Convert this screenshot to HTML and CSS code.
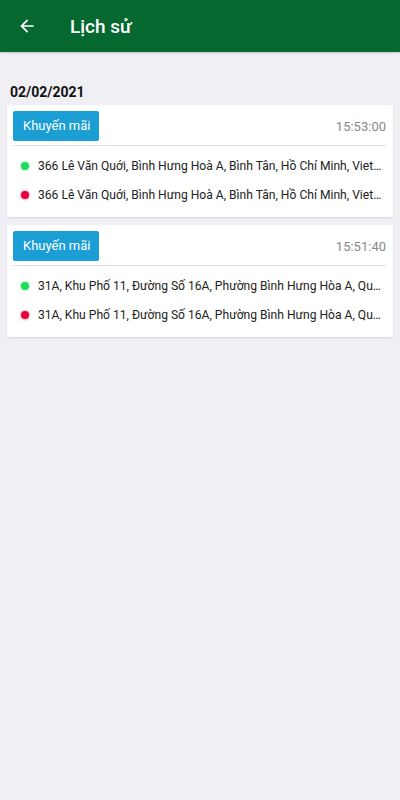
FILE: index.html
```html
<!DOCTYPE html>
<html lang="vi">
<head>
  <meta charset="UTF-8">
  <meta name="viewport" content="width=device-width, initial-scale=1.0">
  <title>Lịch sử</title>
  <link rel="stylesheet" href="styles.css">
</head>
<body>
  <header class="app-bar">
    <svg class="back" width="20" height="20" viewBox="0 0 24 24">
      <path d="M20 11H7.83l5.59-5.59L12 4l-8 8 8 8 1.41-1.41L7.83 13H20v-2z" fill="#fff"/>
    </svg>
    <h1>Lịch sử</h1>
  </header>

  <main class="content">
    <h2 class="date">02/02/2021</h2>

    <div class="card">
      <div class="card-head">
        <span class="tag">Khuyến mãi</span>
        <span class="time">15:53:00</span>
      </div>
      <div class="route">
        <div class="stop"><span class="dot start"></span><span class="addr">366 Lê Văn Quới, Bình Hưng Hoà A, Bình Tân, Hồ Chí Minh, Viet…</span></div>
        <div class="stop"><span class="dot end"></span><span class="addr">366 Lê Văn Quới, Bình Hưng Hoà A, Bình Tân, Hồ Chí Minh, Viet…</span></div>
      </div>
    </div>

    <div class="card">
      <div class="card-head">
        <span class="tag">Khuyến mãi</span>
        <span class="time">15:51:40</span>
      </div>
      <div class="route">
        <div class="stop"><span class="dot start"></span><span class="addr">31A, Khu Phố 11, Đường Số 16A, Phường Bình Hưng Hòa A, Qu…</span></div>
        <div class="stop"><span class="dot end"></span><span class="addr">31A, Khu Phố 11, Đường Số 16A, Phường Bình Hưng Hòa A, Qu…</span></div>
      </div>
    </div>
  </main>
</body>
</html>
```

FILE: styles.css
```css
/* Global */
body {
  margin: 0;
  font-family: Roboto, 'Noto Sans', sans-serif;
  background-color: #efeff4;
  color: #222;
  height: 800px;
}

/* App bar */
.app-bar {
  height: 52px;
  background-color: #05692f;
  display: flex;
  align-items: center;
  padding-left: 17px;
  box-shadow: 0 1px 2px rgba(0, 0, 0, 0.2);
}

.app-bar h1 {
  margin: 0 0 0 33px;
  font-size: 19px;
  font-weight: 500;
  color: #fff;
}

/* Content */
.content {
  padding: 30px 7px 0;
}

.date {
  margin: 0 0 3px 3px;
  font-size: 14px;
  font-weight: 700;
  line-height: 20px;
  color: #111;
}

.card {
  background-color: #fff;
  border-radius: 3px;
  box-shadow: 0 1px 2px rgba(0, 0, 0, 0.12);
  padding: 6px 7px 8px 6px;
  margin-bottom: 8px;
}

.card-head {
  display: flex;
  justify-content: space-between;
  align-items: center;
  padding-bottom: 4px;
  border-bottom: 1px solid #e2e2e2;
}

.tag {
  background-color: #1a9ed4;
  color: #fff;
  font-size: 13px;
  line-height: 30px;
  padding: 0 9px 0 10px;
  border-radius: 2px;
}

.time {
  font-size: 13px;
  color: #888;
}

.route {
  padding: 5px 0 0;
}

.stop {
  display: flex;
  align-items: center;
  height: 29px;
}

.dot {
  flex: none;
  width: 8px;
  height: 8px;
  border-radius: 50%;
  margin: 0 9px 0 8px;
}

.dot.start {
  background-color: #1fdc5a;
  box-shadow: 0 0 3px rgba(31, 220, 90, 0.6);
}

.dot.end {
  background-color: #e8003c;
  box-shadow: 0 0 3px rgba(232, 0, 60, 0.6);
}

.addr {
  font-size: 12.1px;
  color: #222;
  white-space: nowrap;
  overflow: hidden;
  text-overflow: ellipsis;
}
```
